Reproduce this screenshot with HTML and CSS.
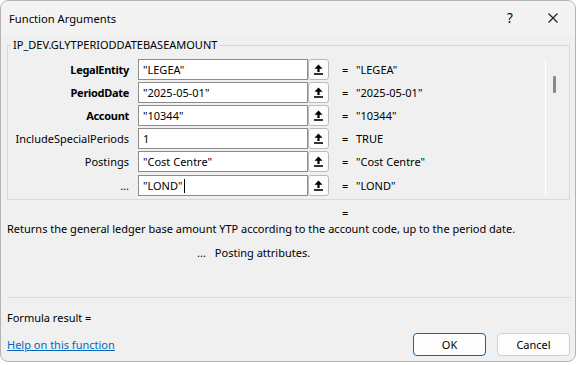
FILE: index.html
```html
<!DOCTYPE html>
<html lang="en">
<head>
    <meta charset="UTF-8">
    <meta name="viewport" content="width=device-width, initial-scale=1.0">
    <title>Function Arguments</title>
    <link rel="stylesheet" href="styles.css">
</head>
<body>
    <div class="dialog">
        <div class="titlebar">
            <span class="title">Function Arguments</span>
            <span class="help-btn">?</span>
            <span class="close-btn">
                <svg width="10" height="10" viewBox="0 0 10 10"><path d="M0.5 0.5 L9.5 9.5 M9.5 0.5 L0.5 9.5" stroke="#1a1a1a" stroke-width="1.1" fill="none"/></svg>
            </span>
        </div>

        <fieldset class="args">
            <legend>IP_DEV.GLYTPERIODDATEBASEAMOUNT</legend>
            <div class="args-body">
                <div class="arg-list">
                    <div class="arg-row">
                        <span class="arg-name required">LegalEntity</span>
                        <div class="arg-input">"LEGEA"</div>
                        <span class="ref-btn"><svg width="9" height="11" viewBox="0 0 9 11"><path d="M4.5 0.5 L8.5 4.8 H5.6 V8 H3.4 V4.8 H0.5 Z" fill="#000"/><rect x="0" y="9.2" width="9" height="1.6" fill="#000"/></svg></span>
                        <span class="arg-eq">=</span>
                        <span class="arg-val">"LEGEA"</span>
                    </div>
                    <div class="arg-row">
                        <span class="arg-name required">PeriodDate</span>
                        <div class="arg-input">"2025-05-01"</div>
                        <span class="ref-btn"><svg width="9" height="11" viewBox="0 0 9 11"><path d="M4.5 0.5 L8.5 4.8 H5.6 V8 H3.4 V4.8 H0.5 Z" fill="#000"/><rect x="0" y="9.2" width="9" height="1.6" fill="#000"/></svg></span>
                        <span class="arg-eq">=</span>
                        <span class="arg-val">"2025-05-01"</span>
                    </div>
                    <div class="arg-row">
                        <span class="arg-name required">Account</span>
                        <div class="arg-input">"10344"</div>
                        <span class="ref-btn"><svg width="9" height="11" viewBox="0 0 9 11"><path d="M4.5 0.5 L8.5 4.8 H5.6 V8 H3.4 V4.8 H0.5 Z" fill="#000"/><rect x="0" y="9.2" width="9" height="1.6" fill="#000"/></svg></span>
                        <span class="arg-eq">=</span>
                        <span class="arg-val">"10344"</span>
                    </div>
                    <div class="arg-row">
                        <span class="arg-name">IncludeSpecialPeriods</span>
                        <div class="arg-input">1</div>
                        <span class="ref-btn"><svg width="9" height="11" viewBox="0 0 9 11"><path d="M4.5 0.5 L8.5 4.8 H5.6 V8 H3.4 V4.8 H0.5 Z" fill="#000"/><rect x="0" y="9.2" width="9" height="1.6" fill="#000"/></svg></span>
                        <span class="arg-eq">=</span>
                        <span class="arg-val">TRUE</span>
                    </div>
                    <div class="arg-row">
                        <span class="arg-name">Postings</span>
                        <div class="arg-input">"Cost Centre"</div>
                        <span class="ref-btn"><svg width="9" height="11" viewBox="0 0 9 11"><path d="M4.5 0.5 L8.5 4.8 H5.6 V8 H3.4 V4.8 H0.5 Z" fill="#000"/><rect x="0" y="9.2" width="9" height="1.6" fill="#000"/></svg></span>
                        <span class="arg-eq">=</span>
                        <span class="arg-val">"Cost Centre"</span>
                    </div>
                    <div class="arg-row arg-row-last">
                        <span class="arg-name">...</span>
                        <div class="arg-input">"LOND"<span class="caret"></span></div>
                        <span class="ref-btn"><svg width="9" height="11" viewBox="0 0 9 11"><path d="M4.5 0.5 L8.5 4.8 H5.6 V8 H3.4 V4.8 H0.5 Z" fill="#000"/><rect x="0" y="9.2" width="9" height="1.6" fill="#000"/></svg></span>
                        <span class="arg-eq">=</span>
                        <span class="arg-val">"LOND"</span>
                    </div>
                </div>
                <div class="scroll">
                    <div class="thumb"></div>
                </div>
            </div>
        </fieldset>

        <div class="result-eq">=</div>
        <p class="desc">Returns the general ledger base amount YTP according to the account code, up to the period date.</p>
        <p class="arg-desc"><span class="arg-desc-name">...</span>Posting attributes.</p>

        <div class="divider"></div>

        <div class="formula">Formula result =</div>

        <div class="footer">
            <a class="help-link" href="#">Help on this function</a>
            <div class="buttons">
                <button class="btn btn-primary">OK</button>
                <button class="btn">Cancel</button>
            </div>
        </div>
    </div>
</body>
</html>
```

FILE: styles.css
```css
body {
    margin: 0;
    background: #ffffff;
    font-family: "Noto Sans", "Open Sans", sans-serif;
    font-size: 11px;
    color: #000;
}
.dialog {
    width: 576px;
    height: 362px;
    box-sizing: border-box;
    border: 1px solid #b4b4b4;
    border-radius: 8px;
    background: #f0f0f0;
    overflow: hidden;
    display: flex;
    flex-direction: column;
}
.titlebar {
    height: 34px;
    flex: none;
    display: flex;
    align-items: center;
    padding-left: 8px;
    background: #f3f3f3;
}
.title {
    flex: 1;
    font-size: 11.2px;
}
.help-btn {
    font-size: 13.5px;
    width: 10px;
    margin-right: 31px;
}
.close-btn {
    display: flex;
    margin-right: 17px;
}

/* argument group */
.args {
    margin: 2px 5px 0 6px;
    padding: 6px 0 3px 0;
    border: 1px solid #d8d8d8;
    min-width: 0;
}
.args legend {
    margin-left: 3px;
    padding: 0 2px;
    line-height: 16px;
}
.args-body {
    display: flex;
}
.arg-list {
    width: 537px;
    border-right: 1px solid #ffffff;
    display: flex;
    flex-direction: column;
    gap: 2px;
}
.arg-row {
    display: grid;
    grid-template-columns: 130px 170px 21px 27px 1fr;
    height: 21px;
    align-items: center;
}
.arg-row-last {
    margin-top: 1px;
}
.arg-name {
    text-align: right;
    padding-right: 9px;
    white-space: nowrap;
}
.required {
    font-weight: bold;
    letter-spacing: -0.3px;
}
.arg-input {
    height: 21px;
    box-sizing: border-box;
    border: 1px solid #8c8c8c;
    background: #fff;
    padding: 0 4px;
    line-height: 19px;
    display: flex;
    align-items: center;
}
.caret {
    width: 1px;
    height: 14px;
    background: #000;
    margin-left: 1px;
}
.ref-btn {
    height: 21px;
    box-sizing: border-box;
    border: 1px solid #b9b9b9;
    border-radius: 3px;
    background: #fcfcfc;
    display: flex;
    align-items: center;
    justify-content: center;
}
.arg-eq {
    padding-left: 13px;
}
.arg-val {
    white-space: nowrap;
}
.scroll {
    flex: 1;
}
.thumb {
    width: 3px;
    height: 17px;
    margin: 17px 0 0 7px;
    border-radius: 1px;
    background: #8a8a8a;
}

/* description */
.result-eq {
    margin-top: 5px;
    padding-left: 341px;
    line-height: 16px;
}
.desc {
    margin: 0;
    padding-left: 6px;
    line-height: 16px;
    white-space: nowrap;
}
.arg-desc {
    margin: 8px 0 0 0;
    padding-left: 196px;
    line-height: 16px;
}
.arg-desc-name {
    margin-right: 9px;
}
.divider {
    margin: 36px 4px 0 6px;
    height: 1px;
    background: #dadada;
}
.formula {
    margin-top: 12px;
    padding-left: 6px;
    line-height: 16px;
}

/* footer */
.footer {
    margin-top: 7px;
    padding: 0 5px 0 6px;
    display: flex;
    align-items: center;
    justify-content: space-between;
}
.help-link {
    color: #0067c0;
    text-decoration: underline;
}
.buttons {
    display: flex;
    gap: 11px;
}
.btn {
    width: 73px;
    height: 23px;
    border: 1px solid #d0d0d0;
    border-radius: 4px;
    background: #fdfdfd;
    font-family: inherit;
    font-size: 11px;
    color: #000;
    padding: 0;
}
.btn-primary {
    border-color: #0067c0;
}
```
